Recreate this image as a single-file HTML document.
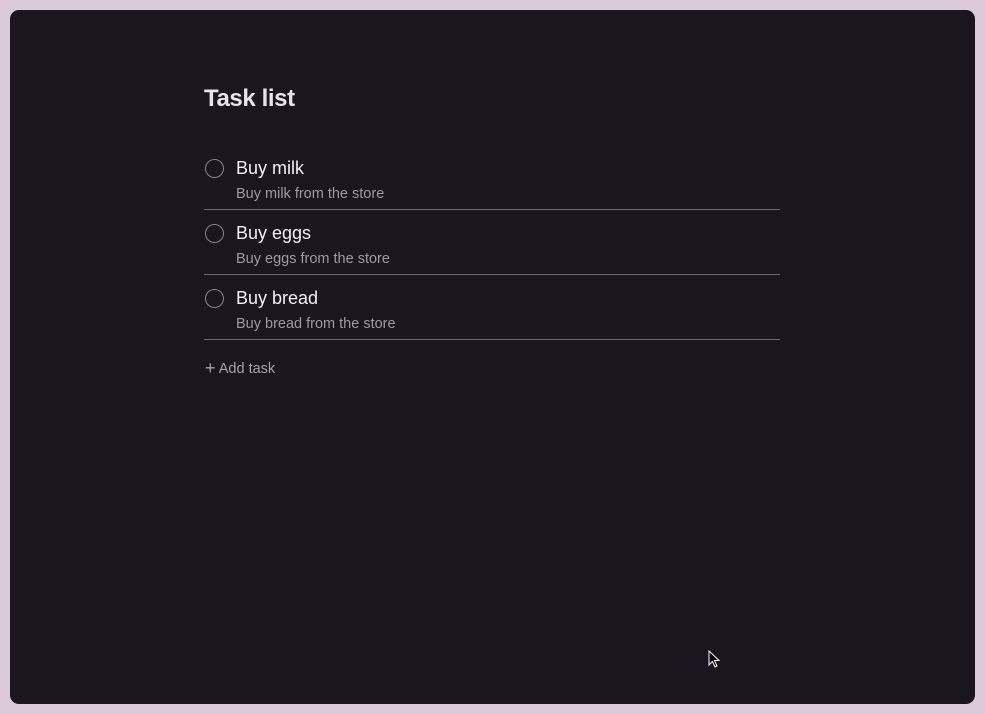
<!DOCTYPE html>
<html><head><style>
html,body{margin:0;padding:0;width:985px;height:714px;overflow:hidden;background:#dccadb;font-family:"Liberation Sans",sans-serif}
.win{position:absolute;left:10px;top:10px;width:965px;height:694px;background:#19161f;border-radius:9px}
h1{position:absolute;left:204px;top:85px;margin:0;font-size:24px;font-weight:bold;color:#e6e4ea;letter-spacing:-0.4px}
.row{position:absolute;left:204px;width:576px;height:64px;border-bottom:1px solid #6a6870}
.c{position:absolute;left:1px;top:14px;width:17px;height:17px;border:1.5px solid #85838b;border-radius:50%}
.t{position:absolute;left:32px;top:13px;font-size:18px;color:#f1f0f4}
.s{position:absolute;left:32px;top:41px;font-size:14.5px;color:#9c9aa2}
.add{position:absolute;left:205px;top:357px;font-size:14.5px;color:#a3a1aa}
</style></head><body>
<div class="win"></div>
<h1>Task list</h1>
<div class="row" style="top:145px"><div class="c"></div><div class="t">Buy milk</div><div class="s">Buy milk from the store</div></div>
<div class="row" style="top:210px"><div class="c"></div><div class="t">Buy eggs</div><div class="s">Buy eggs from the store</div></div>
<div class="row" style="top:275px"><div class="c"></div><div class="t">Buy bread</div><div class="s">Buy bread from the store</div></div>
<div class="add"><span style="font-size:18px;position:relative;top:1px">+</span> Add task</div>
<svg style="position:absolute;left:708px;top:650px" width="14" height="20" viewBox="0 0 14 20"><path d="M1 1 L1 15 L4.5 11.5 L7 17 L9 16 L6.5 10.5 L11 10.5 Z" fill="#000" stroke="#fff" stroke-width="1"/></svg>
</body></html>
